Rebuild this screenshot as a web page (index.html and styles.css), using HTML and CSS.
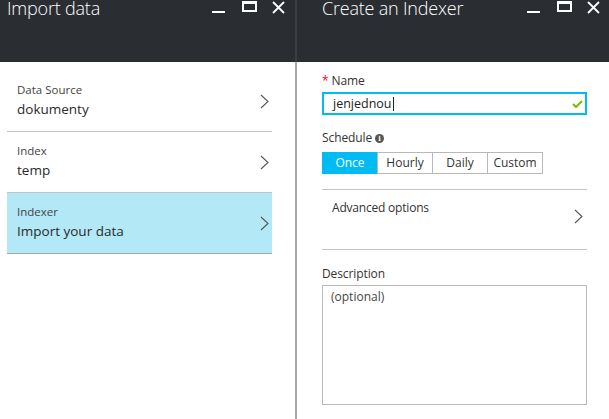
FILE: index.html
```html
<!DOCTYPE html>
<html>
<head>
<meta charset="utf-8">
<link rel="stylesheet" href="styles.css">
</head>
<body>
<div class="app">
  <section class="blade blade-left">
    <header class="blade-head">
      <h1 class="blade-title">Import data</h1>
      <div class="win-ctrls">
        <span class="ctrl ctrl-min"></span>
        <span class="ctrl ctrl-max"></span>
        <svg class="ctrl-close" width="13" height="13" viewBox="0 0 13 13"><path d="M1 1L12 12M12 1L1 12" stroke="#fff" stroke-width="1.8"/></svg>
      </div>
    </header>
    <div class="steps">
      <div class="step">
        <div class="step-text"><div class="step-label">Data Source</div><div class="step-value">dokumenty</div></div>
        <svg class="chev" width="9" height="15" viewBox="0 0 9 15"><path d="M1 1L8 7.5L1 14" fill="none" stroke="#555" stroke-width="1.1"/></svg>
      </div>
      <div class="step">
        <div class="step-text"><div class="step-label">Index</div><div class="step-value">temp</div></div>
        <svg class="chev" width="9" height="15" viewBox="0 0 9 15"><path d="M1 1L8 7.5L1 14" fill="none" stroke="#555" stroke-width="1.1"/></svg>
      </div>
      <div class="step step-active">
        <div class="step-text"><div class="step-label">Indexer</div><div class="step-value">Import your data</div></div>
        <svg class="chev" width="9" height="15" viewBox="0 0 9 15"><path d="M1 1L8 7.5L1 14" fill="none" stroke="#555" stroke-width="1.1"/></svg>
      </div>
    </div>
  </section>
  <div class="splitter"></div>
  <section class="blade blade-right">
    <header class="blade-head">
      <h1 class="blade-title title-right">Create an Indexer</h1>
      <div class="win-ctrls">
        <span class="ctrl ctrl-min"></span>
        <span class="ctrl ctrl-max"></span>
        <svg class="ctrl-close" width="13" height="13" viewBox="0 0 13 13"><path d="M1 1L12 12M12 1L1 12" stroke="#fff" stroke-width="1.8"/></svg>
      </div>
    </header>
    <div class="form">
      <label class="field-label"><span class="req">*</span> Name</label>
      <div class="input">
        <span class="input-text">jenjednou</span><span class="caret"></span>
        <svg class="check" width="11" height="8" viewBox="0 0 11 8"><path d="M1 4L4 7L10 1" fill="none" stroke="#7fba00" stroke-width="2"/></svg>
      </div>
      <label class="field-label label-sched">Schedule <span class="info">i</span></label>
      <div class="seg">
        <span class="seg-btn seg-on">Once</span><span class="seg-btn">Hourly</span><span class="seg-btn">Daily</span><span class="seg-btn">Custom</span>
      </div>
      <div class="adv">
        <span class="adv-text">Advanced options</span>
        <svg class="chev adv-chev" width="9" height="15" viewBox="0 0 9 15"><path d="M1 1L8 7.5L1 14" fill="none" stroke="#555" stroke-width="1.1"/></svg>
      </div>
      <label class="field-label label-desc">Description</label>
      <div class="textarea">(optional)</div>
    </div>
  </section>
</div>
</body>
</html>
```
FILE: styles.css
```css
* { box-sizing: border-box; }
html, body { margin: 0; padding: 0; }
body {
  width: 609px;
  height: 419px;
  overflow: hidden;
  background: #fff;
  font-family: "Open Sans", "Noto Sans", sans-serif;
  color: #333;
}
.app { display: flex; height: 419px; }
.blade { display: flex; flex-direction: column; }
.blade-left { width: 295px; }
.blade-right { flex: 1; }
.splitter {
  width: 2px;
  background: linear-gradient(#3b4045 0, #3b4045 62px, #a8a8a8 62px);
}
.blade-head {
  height: 62px;
  background: #2a2e33;
  display: flex;
  align-items: flex-start;
  justify-content: space-between;
  padding: 0 0 0 7px;
}
.blade-title {
  margin: 0;
  font-family: "Open Sans", sans-serif;
  font-weight: 300;
  font-size: 18px;
  line-height: 16px;
  color: #fff;
  letter-spacing: -0.2px;
}
.title-right { margin-left: 18px; }
.win-ctrls {
  display: flex;
  align-items: flex-start;
  padding-top: 1px;
}
.ctrl-min {
  width: 13px; height: 2px; background: #fff;
  margin-top: 10px;
}
.ctrl-max {
  width: 15px; height: 11px;
  border: 2px solid #fff; border-top-width: 3px;
  margin-left: 17px;
}
.ctrl-close { margin-left: 15px; margin-right: 10px; }
.blade-right .ctrl-close { margin-right: 9px; }

.steps { padding: 9px 23px 0 7px; }
.step {
  height: 61px;
  border-bottom: 1px solid #c4c4c4;
  display: flex;
  align-items: center;
  justify-content: space-between;
  padding: 0 3px 0 10px;
}
.step-active { background: #b3e8f7; border-bottom-color: #a8a8a8; }
.step-text { margin-top: -3px; }
.step-label { font-size: 11.5px; line-height: 19px; color: #444; }
.step-value { font-size: 13.5px; line-height: 20px; color: #2a2a2a; }
.chev { display: block; }

.form { padding: 11px 22px 0 25px; display: flex; flex-direction: column; }
.field-label { font-size: 12px; line-height: 16px; color: #333; display: block; letter-spacing: -0.1px; }
.req { color: #e81123; font-size: 12px; }
.input {
  margin-top: 3px;
  height: 23px;
  border: 2px solid #00bcf2;
  display: flex; align-items: center;
  padding: 0 2px 0 9px;
  font-size: 12.5px;
  color: #222;
}
.caret { width: 1px; height: 14px; background: #222; margin-left: 1px; }
.check { margin-left: auto; }
.label-sched { margin-top: 15px; display: flex; align-items: center; gap: 3px; }
.info {
  display: inline-flex; width: 9px; height: 9px; border-radius: 50%;
  background: #555; color: #fff; font-size: 7px; font-weight: 700;
  align-items: center; justify-content: center; line-height: 1;
  font-family: "DejaVu Serif", serif;
}
.seg { display: flex; margin-top: 6px; }
.seg-btn {
  width: 56px; height: 22px;
  border: 1px solid #b8b8b8; margin-left: -1px;
  font-size: 12px; line-height: 20px; text-align: center; color: #333;
}
.seg-btn:first-child { margin-left: 0; }
.seg-on { background: #00bcf2; border-color: #00bcf2; color: #fff; }
.adv {
  margin-top: 15px;
  height: 61px;
  border-top: 1px solid #c4c4c4;
  border-bottom: 1px solid #c4c4c4;
  display: flex; justify-content: space-between; align-items: flex-start;
  padding: 10px 4px 0 10px;
}
.adv-text { font-size: 12px; line-height: 16px; letter-spacing: -0.2px; }
.adv-chev { margin-top: 9px; }
.label-desc { margin-top: 16px; }
.textarea {
  margin-top: 3px;
  height: 120px;
  border: 1px solid #b8b8b8;
  padding: 3px 8px;
  font-size: 12px;
  line-height: 16px;
  color: #444;
}
```
